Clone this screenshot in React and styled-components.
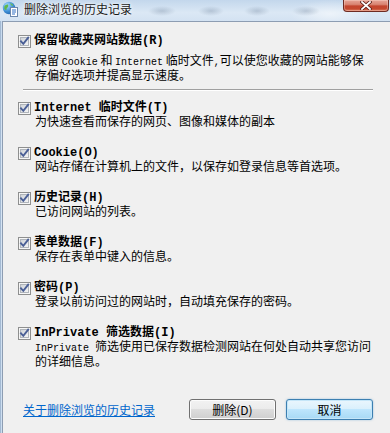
import React, { useId } from 'react';
import styled, { createGlobalStyle } from 'styled-components';

const cjk = `"Noto Sans CJK SC", "Noto Sans", sans-serif`;
const mono = `"Liberation Mono", "Noto Sans CJK SC", monospace`;

const GlobalStyle = createGlobalStyle`
  html, body { margin: 0; padding: 0; }
  body { width: 390px; height: 433px; overflow: hidden; background: #d4e3f3; }
`;

const Window = styled.div`
  width: 390px;
  height: 433px;
  display: flex;
  flex-direction: column;
  background: linear-gradient(180deg, #c6d9ee 0%, #d7e5f4 40%, #cddef0 100%);
  box-shadow: inset 1px 0 0 #a3b9d2;
`;

const TitleBar = styled.div`
  height: 21px;
  flex: none;
  display: flex;
  align-items: flex-start;
  background:
    radial-gradient(ellipse 14px 5px at 162px 11px, rgba(110, 130, 155, 0.35), transparent),
    radial-gradient(ellipse 13px 5px at 211px 11px, rgba(110, 130, 155, 0.35), transparent),
    radial-gradient(ellipse 13px 5px at 257px 11px, rgba(110, 130, 155, 0.35), transparent),
    radial-gradient(ellipse 14px 5px at 306px 11px, rgba(110, 130, 155, 0.35), transparent),
    radial-gradient(ellipse 40px 14px at 330px 14px, rgba(255, 255, 255, 0.5), transparent),
    linear-gradient(180deg, #c3d7ec 0%, #dbe8f5 60%, #d3e2f2 100%);
`;

const TitleIcon = styled.svg`
  flex: none;
  margin: 1px 0 0 2px;
`;

const TitleText = styled.span`
  margin: 1px 0 0 6px;
  font: 12px/15px ${cjk};
  color: #1a1a1a;
  text-shadow: 0 0 5px rgba(255, 255, 255, 0.95), 0 0 2px rgba(255, 255, 255, 0.9);
  white-space: nowrap;
`;

const CloseButton = styled.div`
  margin-left: auto;
  margin-right: 1px;
  width: 46px;
  height: 12px;
  box-sizing: border-box;
  border: 1px solid #6e2b22;
  border-top: none;
  border-radius: 0 0 4px 4px;
  background: linear-gradient(180deg, #e7a597 0%, #d98573 40%, #c3452e 55%, #c5492f 80%, #df8266 100%);
  box-shadow: inset 0 0 0 1px rgba(255, 230, 220, 0.35);
  display: flex;
  align-items: center;
  justify-content: center;
`;

const Client = styled.div`
  flex: 1;
  margin-left: 2px;
  box-sizing: border-box;
  min-height: 0;
  background: #f0f0f0;
  border-top: 1px solid #8d9db2;
  border-left: 1px solid #8d9db2;
  display: flex;
  flex-direction: column;
  padding: 13px 17px 13px 15px;
`;

const Item = styled.div`
  display: flex;
  flex-direction: column;
  margin-top: ${(p) => p.$mt || 0}px;
`;

const Head = styled.div`
  display: flex;
  align-items: center;
  gap: 3px;
  height: 13px;
`;

const Title = styled.span`
  font: bold 12px/13px ${mono};
  color: #000;
  white-space: nowrap;
`;

const Desc = styled.div`
  margin-left: 17px;
  margin-top: ${(p) => p.$mt || 0}px;
  font: 12px/12px ${cjk};
  color: #000;
  white-space: nowrap;
`;

const Lat = styled.span`
  font-family: "Liberation Mono", monospace;
  font-size: 10px;
`;

const Separator = styled.div`
  margin: 8px 0 0 5px;
  height: 1px;
  background: #a0a0a0;
  border-bottom: 1px solid #ffffff;
`;

const Footer = styled.div`
  margin-top: auto;
  padding-left: 5px;
  height: 21px;
  display: flex;
  align-items: center;
`;

const Link = styled.a`
  font: 12px/13px ${cjk};
  color: #0066cc;
  text-decoration: underline;
  white-space: nowrap;
  cursor: pointer;
`;

const Buttons = styled.div`
  margin-left: auto;
  display: flex;
  gap: 10px;
`;

const Button = styled.button`
  width: 87px;
  height: 21px;
  padding: 0;
  box-sizing: border-box;
  border-radius: 3px;
  font: 12px/1 ${cjk};
  color: #000;
  border: 1px solid ${(p) => (p.$primary ? '#3c7fb1' : '#707070')};
  background: ${(p) =>
    p.$primary
      ? 'linear-gradient(180deg, #eaf6fd 0%, #d9f0fc 50%, #bee6fd 50%, #a7d9f5 100%)'
      : 'linear-gradient(180deg, #f2f2f2 0%, #ebebeb 50%, #dddddd 50%, #cfcfcf 100%)'};
  box-shadow: ${(p) =>
    p.$primary
      ? 'inset 0 0 0 1px #c5e6f8, 0 0 2px rgba(60, 140, 200, 0.5)'
      : 'inset 0 0 0 1px #fcfcfc'};
`;

function Checkbox() {
  const id = useId().replace(/:/g, '');
  return (
    <svg width="13" height="13" viewBox="0 0 13 13" style={{ flex: 'none' }}>
      <defs>
        <linearGradient id={`g${id}`} x1="0" y1="0" x2="1" y2="1">
          <stop offset="0" stopColor="#cdd1d6" />
          <stop offset="1" stopColor="#f7f7f7" />
        </linearGradient>
      </defs>
      <rect x="0.5" y="0.5" width="12" height="12" fill="#f6f6f6" stroke="#8e8f8f" />
      <rect x="2.5" y="2.5" width="8" height="8" fill={`url(#g${id})`} stroke="#b0b5bb" />
      <path d="M3 6.3 L5.3 8.8 L10.2 2.6" fill="none" stroke="#4a5f96" strokeWidth="1.9" strokeLinecap="square" />
    </svg>
  );
}

const items = [
  {
    title: 'Internet 临时文件(T)',
    desc: [<>为快速查看而保存的网页、图像和媒体的副本</>],
  },
  {
    title: 'Cookie(O)',
    desc: [<>网站存储在计算机上的文件，以保存如登录信息等首选项。</>],
  },
  { title: '历史记录(H)', desc: [<>已访问网站的列表。</>] },
  { title: '表单数据(F)', desc: [<>保存在表单中键入的信息。</>] },
  { title: '密码(P)', desc: [<>登录以前访问过的网站时，自动填充保存的密码。</>] },
  {
    title: 'InPrivate 筛选数据(I)',
    desc: [
      <>
        <Lat>InPrivate </Lat>筛选使用已保存数据检测网站在何处自动共享您访问
      </>,
      <>的详细信息。</>,
    ],
  },
];

export default function App() {
  return (
    <>
      <GlobalStyle />
      <Window>
        <TitleBar>
          <TitleIcon width="16" height="16" viewBox="0 0 16 16">
            <defs>
              <radialGradient id="globe" cx="0.35" cy="0.3" r="0.8">
                <stop offset="0" stopColor="#a9dcff" />
                <stop offset="0.6" stopColor="#3d8fd6" />
                <stop offset="1" stopColor="#1f5fa8" />
              </radialGradient>
            </defs>
            <circle cx="7" cy="7" r="6.2" fill="url(#globe)" />
            <path d="M2.5 5 Q4 3 6 3.5 Q7 5 5.5 6.5 Q4 7 4.5 9 Q3 9 2.2 7.5 Z" fill="#5fb84a" />
            <path d="M8 2 Q10.5 2.5 11.5 4.5 Q10 5 9 4 Z" fill="#6cc04f" />
            <rect x="8.5" y="6.5" width="7" height="9" fill="#ffffff" stroke="#6b87ad" />
            <path d="M10 9 H14 M10 11 H14 M10 13 H13" stroke="#2f6fc4" strokeWidth="1" />
          </TitleIcon>
          <TitleText>删除浏览的历史记录</TitleText>
          <CloseButton>
            <svg width="12" height="9" viewBox="0 0 12 9">
              <path d="M2 1 L10 8 M10 1 L2 8" stroke="#5a1d16" strokeWidth="3.4" strokeLinecap="square" />
              <path d="M2 1 L10 8 M10 1 L2 8" stroke="#ffffff" strokeWidth="1.8" strokeLinecap="square" />
            </svg>
          </CloseButton>
        </TitleBar>
        <Client>
          <Item>
            <Head>
              <Checkbox />
              <Title>保留收藏夹网站数据(R)</Title>
            </Head>
            <Desc $mt={6}>
              保留 <Lat>Cookie</Lat> 和 <Lat>Internet</Lat> 临时文件<Lat>,</Lat>可以使您收藏的网站能够保
            </Desc>
            <Desc>存偏好选项并提高显示速度。</Desc>
          </Item>
          <Separator />
          {items.map((it, i) => (
            <Item key={it.title} $mt={i === 0 ? 11 : 20}>
              <Head>
                <Checkbox />
                <Title>{it.title}</Title>
              </Head>
              {it.desc.map((d, j) => (
                <Desc key={j}>{d}</Desc>
              ))}
            </Item>
          ))}
          <Footer>
            <Link>关于删除浏览的历史记录</Link>
            <Buttons>
              <Button>删除(D)</Button>
              <Button $primary>取消</Button>
            </Buttons>
          </Footer>
        </Client>
      </Window>
    </>
  );
}
